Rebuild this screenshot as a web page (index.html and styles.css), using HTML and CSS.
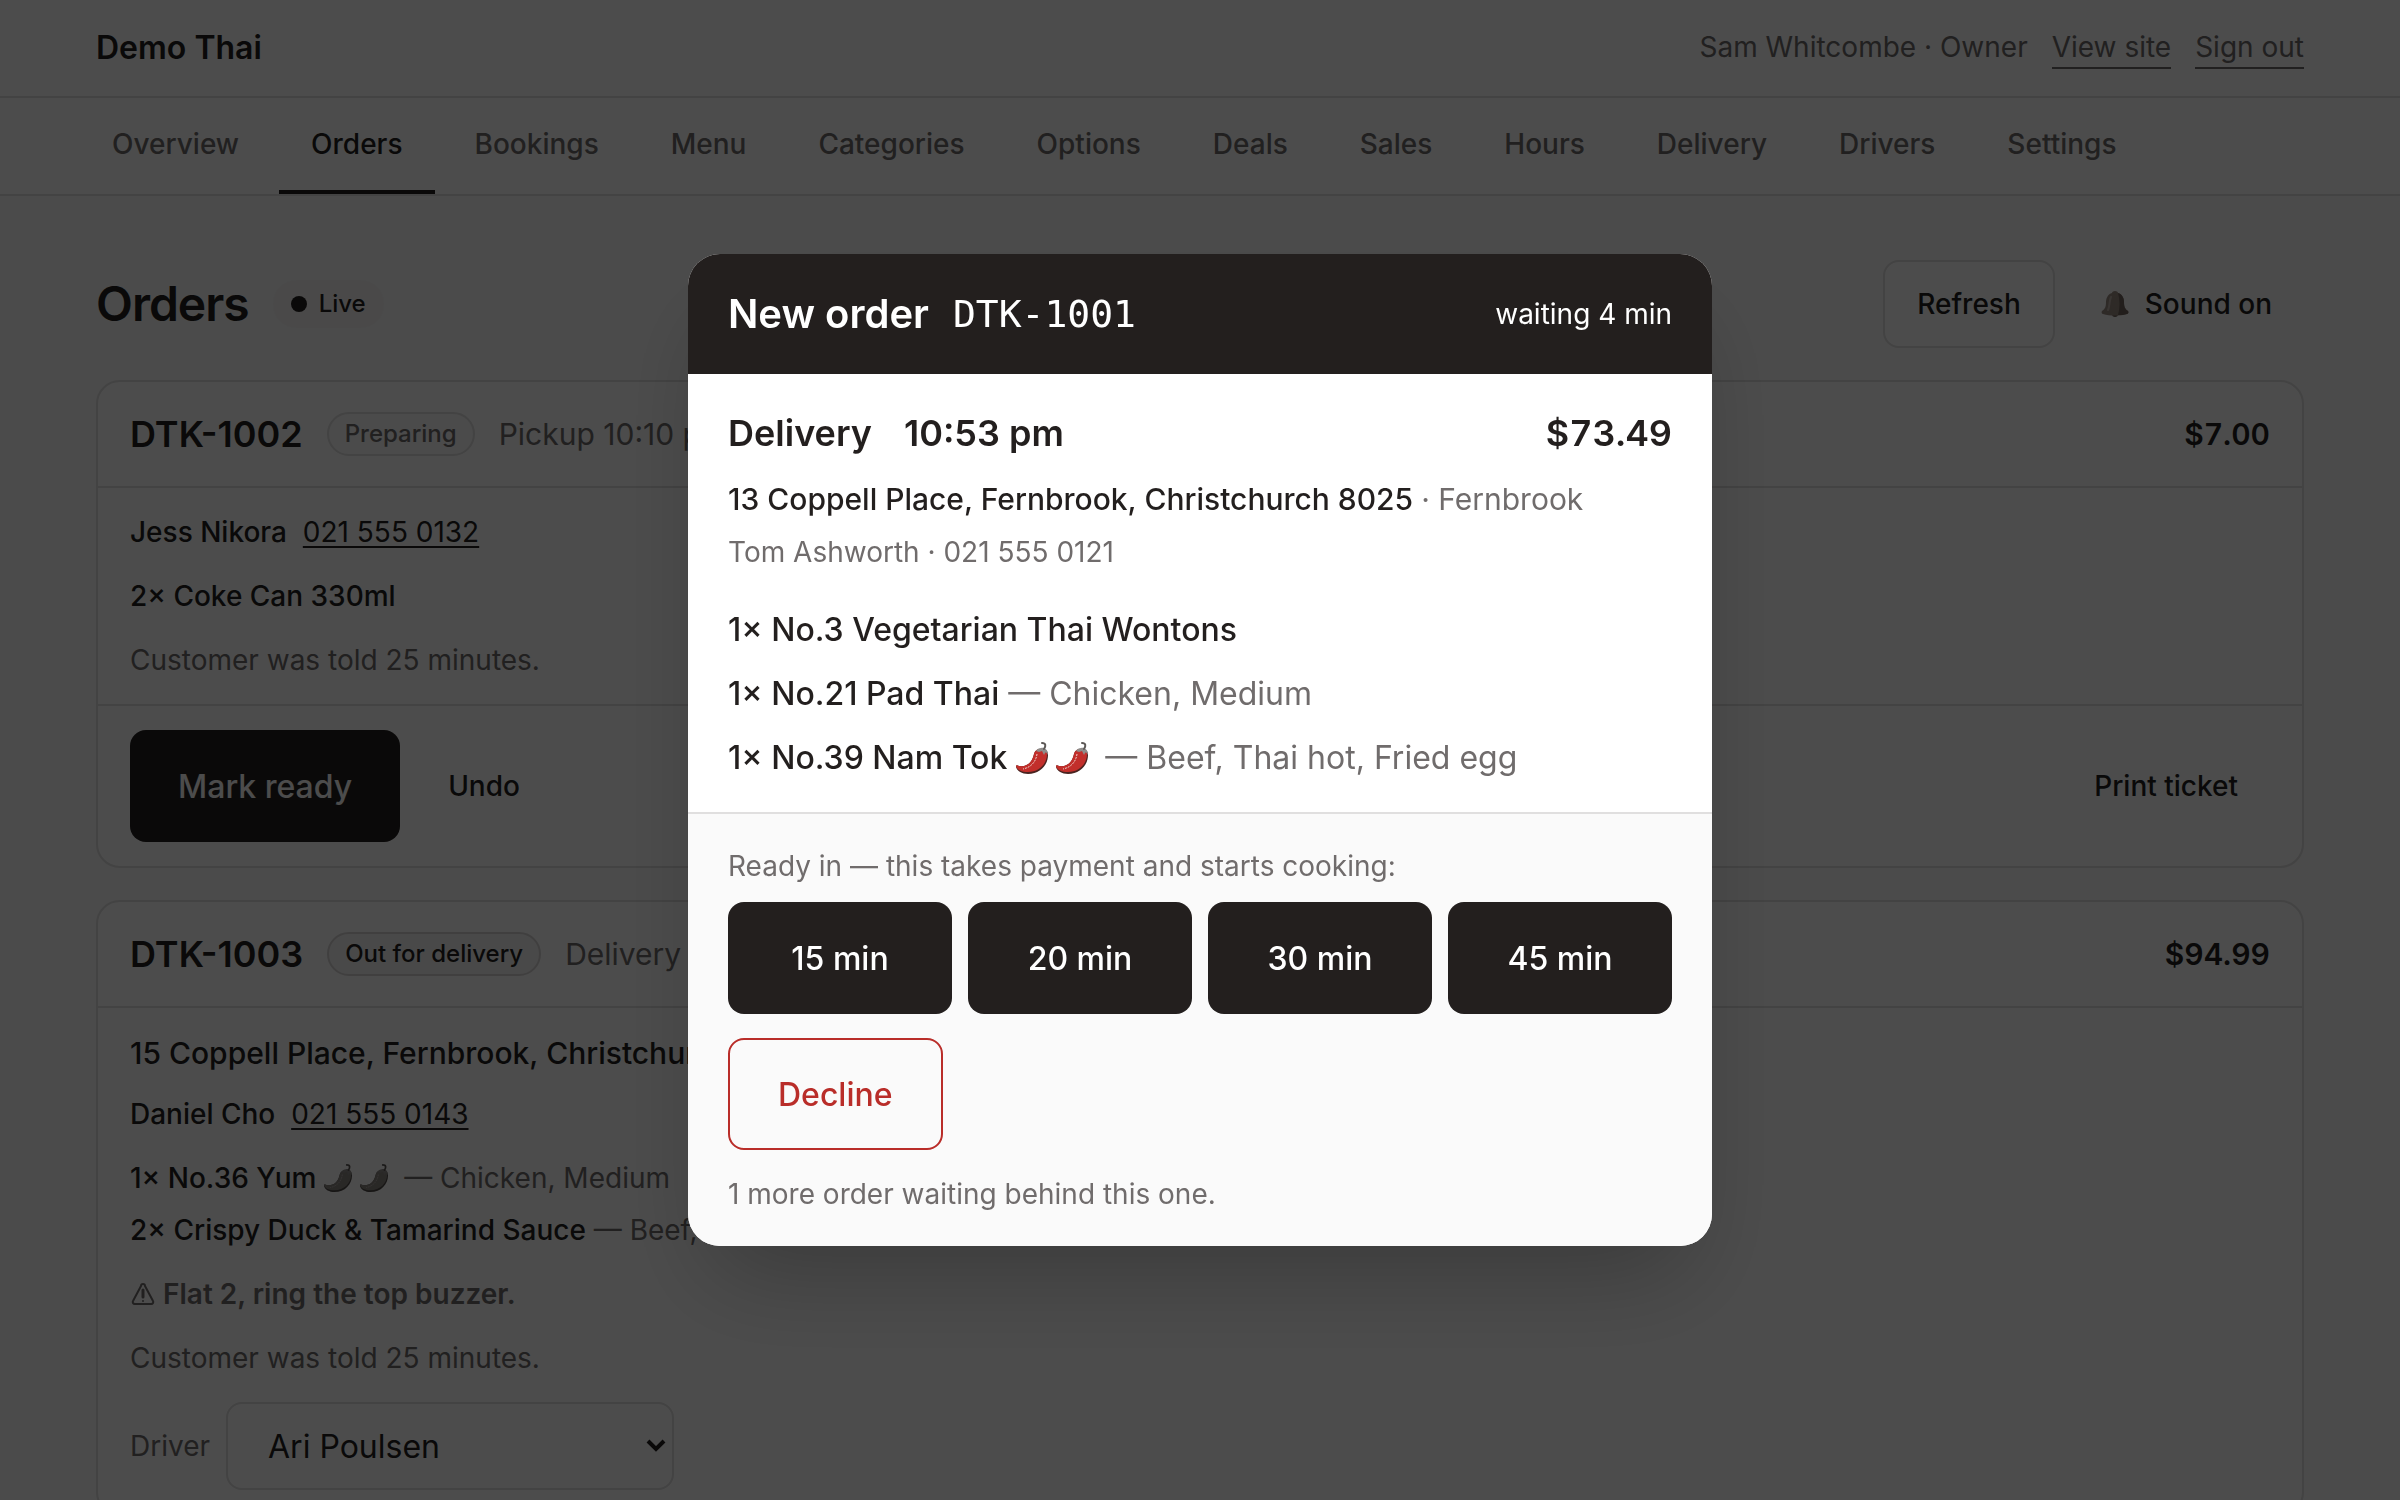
FILE: index.html
```html
<!DOCTYPE html>
<html lang="en">
<head>
    <meta charset="utf-8">
    <meta name="viewport" content="width=device-width, initial-scale=1">
    <title>Orders - Demo Thai</title>
    <link rel="stylesheet" href="styles.css">
</head>
<body>

<!-- Shared icons -->
<svg class="icon-defs" aria-hidden="true">
    <symbol id="icon-chili" viewBox="0 0 32 32">
        <path class="chili-shade" d="M18 12c1-4 4-5 7-5 5 0 7 2 7 6 0 10-8 19-20 19-6 0-11-3-12-7 0-2 1-2 3-1 8 1 13-3 15-12z"/>
        <path class="chili-body" d="M18 12c1-4 4-5 7-5 4 0 6 2 6 5 0 10-8 18-19 18-6 0-11-2-12-6 0-1 1-1 3 0 8 1 13-3 15-12z"/>
        <path class="chili-shine" d="M21 12c-1 7-5 13-14 15"/>
        <path class="chili-cap" d="M20 9c1-2 3-3 5-3 4-1 7 2 7 7-1-2-2-3-3-2l-1 2-2-4-3 1z"/>
        <path class="chili-stem" d="M28 7c2-3 2-6-2-6"/>
    </symbol>
</svg>

<header class="topbar">
    <strong class="brand">Demo Thai</strong>
    <div class="account">
        <span>Sam Whitcombe · Owner</span>
        <a href="#">View site</a>
        <a href="#">Sign out</a>
    </div>
</header>

<nav class="tabs">
    <a href="#">Overview</a>
    <a href="#" class="active">Orders</a>
    <a href="#">Bookings</a>
    <a href="#">Menu</a>
    <a href="#">Categories</a>
    <a href="#">Options</a>
    <a href="#">Deals</a>
    <a href="#">Sales</a>
    <a href="#">Hours</a>
    <a href="#">Delivery</a>
    <a href="#">Drivers</a>
    <a href="#">Settings</a>
</nav>

<main class="page">
    <div class="page-head">
        <h1>Orders</h1>
        <span class="live"><span class="live-dot"></span>Live</span>
        <div class="page-actions">
            <button type="button" class="btn btn-outline">Refresh</button>
            <button type="button" class="btn btn-ghost">
                <svg class="bell" viewBox="0 0 28 28" aria-hidden="true">
                    <circle cx="14" cy="24" r="3" fill="#6f625c"/>
                    <path d="M14 1c2 0 3 1 3 2 4 1 6 5 6 9 0 5 1 7 4 9 1 1 0 3-1 3-7 2-17 2-24 0-1 0-2-2-1-3 3-2 4-4 4-9 0-4 2-8 6-9 0-1 1-2 3-2z" fill="#9c8d84"/>
                    <path d="M17 3c4 1 6 5 6 9 0 5 1 7 4 9 1 1 0 3-1 3-3 1-6 1-9 1 2-7 2-15 0-22z" fill="#73665f"/>
                    <path d="M10 7c-2 4-1 9-3 13" fill="none" stroke="#bfb3ab" stroke-width="2" stroke-linecap="round"/>
                </svg>
                Sound on
            </button>
        </div>
    </div>

    <article class="card">
        <div class="card-head">
            <h2>DTK-1002</h2>
            <span class="badge">Preparing</span>
            <span class="when">Pickup 10:10 pm</span>
            <span class="total">$7.00</span>
        </div>
        <div class="card-body">
            <p class="customer"><b>Jess Nikora</b> <a href="tel:0215550132">021 555 0132</a></p>
            <ul class="items">
                <li><b>2× Coke Can 330ml</b></li>
            </ul>
            <p class="muted">Customer was told 25 minutes.</p>
        </div>
        <div class="card-foot">
            <button type="button" class="btn btn-primary btn-lg">Mark ready</button>
            <button type="button" class="btn btn-ghost">Undo</button>
            <button type="button" class="btn btn-ghost push">Print ticket</button>
        </div>
    </article>

    <article class="card">
        <div class="card-head">
            <h2>DTK-1003</h2>
            <span class="badge badge-strong">Out for delivery</span>
            <span class="when">Delivery 10:20 pm</span>
            <span class="total">$94.99</span>
        </div>
        <div class="card-body">
            <div class="contact">
                <p class="address">15 Coppell Place, Fernbrook, Christchurch 8025</p>
                <p class="customer"><b>Daniel Cho</b> <a href="tel:0215550143">021 555 0143</a></p>
            </div>
            <ul class="items">
                <li><b>1× No.36 Yum</b> <svg class="chili"><use href="#icon-chili"/></svg><svg class="chili"><use href="#icon-chili"/></svg> <span class="muted">— Chicken, Medium</span></li>
                <li><b>2× Crispy Duck &amp; Tamarind Sauce</b> <span class="muted">— Beef, Mild</span></li>
            </ul>
            <p class="note">
                <svg class="warn" viewBox="0 0 24 24" aria-hidden="true">
                    <path d="M10 4a2 2 0 0 1 4 0l8 15a2 2 0 0 1-2 3H4a2 2 0 0 1-2-3z" fill="none" stroke="currentColor" stroke-width="2" stroke-linejoin="round"/>
                    <path d="M12 8v7" stroke="currentColor" stroke-width="3" stroke-linecap="round"/>
                    <circle cx="12" cy="19" r="1" fill="currentColor"/>
                </svg>
                Flat 2, ring the top buzzer.
            </p>
            <p class="muted">Customer was told 25 minutes.</p>
            <div class="driver">
                <label for="driver">Driver</label>
                <div class="select">
                    <select id="driver">
                        <option>Ari Poulsen</option>
                    </select>
                    <svg class="chevron" viewBox="0 0 20 14" aria-hidden="true"><path d="M2 2l8 8 8-8" fill="none" stroke="currentColor" stroke-width="4"/></svg>
                </div>
            </div>
        </div>
    </article>
</main>

<!-- New order alert -->
<div class="overlay">
    <section class="modal" role="dialog" aria-modal="true" aria-labelledby="modal-title">
        <header class="modal-head">
            <h2 id="modal-title">New order</h2>
            <span class="ref">DTK-1001</span>
            <span class="waiting">waiting 4 min</span>
        </header>
        <div class="modal-body">
            <div class="summary">
                <span>Delivery</span>
                <span>10:53 pm</span>
                <span class="amount">$73.49</span>
            </div>
            <div class="contact">
                <p class="address">13 Coppell Place, Fernbrook, Christchurch 8025 <span class="muted">· Fernbrook</span></p>
                <p class="muted">Tom Ashworth · 021 555 0121</p>
            </div>
            <ul class="items">
                <li><b>1× No.3 Vegetarian Thai Wontons</b></li>
                <li><b>1× No.21 Pad Thai</b> <span class="muted">— Chicken, Medium</span></li>
                <li><b>1× No.39 Nam Tok</b> <svg class="chili"><use href="#icon-chili"/></svg><svg class="chili"><use href="#icon-chili"/></svg> <span class="muted">— Beef, Thai hot, Fried egg</span></li>
            </ul>
        </div>
        <footer class="modal-foot">
            <p class="muted">Ready in — this takes payment and starts cooking:</p>
            <div class="times">
                <button type="button" class="btn btn-primary btn-lg">15 min</button>
                <button type="button" class="btn btn-primary btn-lg">20 min</button>
                <button type="button" class="btn btn-primary btn-lg">30 min</button>
                <button type="button" class="btn btn-primary btn-lg">45 min</button>
            </div>
            <button type="button" class="btn btn-danger btn-lg">Decline</button>
            <p class="muted">1 more order waiting behind this one.</p>
        </footer>
    </section>
</div>

</body>
</html>
```

FILE: styles.css
```css
:root {
    --ink: #231f1e;
    --muted: #706c6c;
    --line: #e0dfdf;
    --soft: #fafafa;
    --red: #b92d29;
}

* {
    box-sizing: border-box;
    margin: 0;
    padding: 0;
}

/* The page does not scroll while the alert is open */
body {
    height: 100vh;
    overflow: hidden;
    background: var(--soft);
    color: var(--ink);
    font-family: Inter, "Liberation Sans", sans-serif;
    font-size: 28px;
    line-height: 40px;
}

a {
    color: inherit;
}

b {
    font-weight: 500;
}

ul {
    list-style: none;
}

.icon-defs {
    position: absolute;
    width: 0;
    height: 0;
}

.muted {
    color: var(--muted);
}

.push {
    margin-left: auto;
}

/* Top bar */
.topbar {
    display: flex;
    align-items: center;
    justify-content: space-between;
    height: 98px;
    padding: 0 96px;
    background: #fff;
    border-bottom: 2px solid var(--line);
}

.brand {
    font-size: 32px;
    font-weight: 600;
    line-height: 42px;
}

.account {
    display: flex;
    gap: 24px;
    color: var(--muted);
}

.account a {
    text-decoration: none;
    border-bottom: 2px solid currentColor;
}

/* Tabs */
.tabs {
    display: flex;
    gap: 8px;
    padding: 0 80px;
    background: #fff;
    border-bottom: 2px solid var(--line);
}

.tabs a {
    padding: 26px 32px;
    border-bottom: 4px solid transparent;
    color: var(--muted);
    font-weight: 500;
    text-decoration: none;
}

.tabs a.active {
    color: var(--ink);
    border-color: var(--ink);
}

/* Page */
.page {
    display: flex;
    flex-direction: column;
    gap: 32px;
    padding: 64px 96px;
}

.page-head {
    display: flex;
    align-items: center;
    gap: 24px;
}

.page-head h1 {
    font-size: 48px;
    font-weight: 600;
    letter-spacing: -1px;
    line-height: 56px;
}

.live {
    display: flex;
    align-items: center;
    gap: 12px;
    padding: 4px 18px;
    border-radius: 24px;
    background: #f7f6f6;
    font-size: 24px;
    font-weight: 500;
}

.live-dot {
    width: 16px;
    height: 16px;
    border-radius: 50%;
    background: var(--ink);
}

.page-actions {
    display: flex;
    gap: 14px;
    margin-left: auto;
}

/* Buttons */
.btn {
    display: inline-flex;
    align-items: center;
    justify-content: center;
    gap: 16px;
    height: 88px;
    padding: 0 32px;
    border: none;
    border-radius: 16px;
    background: transparent;
    color: var(--ink);
    font-family: inherit;
    font-size: 28px;
    font-weight: 500;
    cursor: pointer;
}

.btn-lg {
    height: 112px;
    padding: 0 48px;
    font-size: 32px;
}

.btn-outline {
    background: #fff;
    border: 2px solid var(--line);
}

.btn-primary {
    background: var(--ink);
    color: #fff;
}

.btn-danger {
    margin-bottom: 24px;
    border: 2px solid var(--red);
    color: var(--red);
}

.bell {
    width: 28px;
    height: 28px;
}

/* Order cards */
.card {
    background: #fff;
    border: 2px solid var(--line);
    border-radius: 24px;
}

.card-head {
    display: flex;
    align-items: center;
    gap: 24px;
    height: 106px;
    padding: 0 32px;
    border-bottom: 2px solid var(--line);
}

.card-head h2 {
    font-size: 36px;
    font-weight: 600;
}

.badge {
    padding: 0 16px;
    border: 2px solid var(--line);
    border-radius: 22px;
    background: var(--soft);
    color: var(--muted);
    font-size: 24px;
    font-weight: 500;
}

.badge-strong {
    border-color: #d6d4d4;
    background: #f5f4f4;
    color: var(--ink);
}

.when {
    color: var(--muted);
    font-size: 30px;
}

.total,
.amount {
    margin-left: auto;
    font-variant-numeric: tabular-nums;
}

.total {
    font-size: 30px;
    font-weight: 600;
}

.card-body {
    display: flex;
    flex-direction: column;
    gap: 24px;
    padding: 24px 32px;
}

.contact {
    display: flex;
    flex-direction: column;
    gap: 20px;
}

.address {
    font-size: 30px;
    font-weight: 500;
    line-height: 42px;
}

/* The suburb and everything after the street address */
.address .muted {
    font-weight: 400;
}

.customer a {
    margin-left: 8px;
    text-decoration-thickness: 2px;
    text-underline-offset: 4px;
}

.items {
    display: flex;
    flex-direction: column;
    gap: 12px;
}

.note {
    color: var(--muted);
    font-weight: 600;
}

.warn {
    width: 26px;
    height: 24px;
    vertical-align: -2px;
}

.card-foot {
    display: flex;
    align-items: center;
    gap: 16px;
    padding: 24px 32px;
    border-top: 2px solid var(--line);
}

.driver {
    display: flex;
    align-items: center;
    gap: 16px;
    color: var(--muted);
}

/* The chevron shares the select's grid cell */
.select {
    display: grid;
    align-items: center;
    color: var(--ink);
}

.select select {
    grid-area: 1 / 1;
    width: 448px;
    height: 88px;
    padding: 0 40px;
    border: 2px solid var(--line);
    border-radius: 16px;
    background: #fff;
    color: inherit;
    font-family: inherit;
    font-size: 32px;
    appearance: none;
}

.chevron {
    grid-area: 1 / 1;
    justify-self: end;
    width: 20px;
    height: 14px;
    margin-right: 8px;
    pointer-events: none;
}

/* Chili icon, red inside the alert and grey behind it */
.chili {
    --chili: #8b8581;
    --chili-dark: #4f4a48;
    --chili-light: #b5afab;
    width: 28px;
    height: 28px;
    margin-right: 8px;
    vertical-align: -4px;
}

.chili-body {
    fill: var(--chili);
}

.chili-shade {
    fill: var(--chili-dark);
}

.chili-shine {
    fill: none;
    stroke: var(--chili-light);
    stroke-width: 1;
    stroke-dasharray: 2 1;
}

.chili-cap {
    fill: #8f8c8a;
}

.chili-stem {
    fill: none;
    stroke: #5c5856;
    stroke-width: 2;
    stroke-linecap: round;
}

/* Alert */
.overlay {
    position: fixed;
    inset: 0;
    display: flex;
    align-items: center;
    justify-content: center;
    padding: 32px;
    background: rgba(0, 0, 0, 0.7);
}

.modal {
    width: 100%;
    max-width: 1024px;
    overflow: hidden;
    border-radius: 32px;
    background: #fff;
    box-shadow: 0 50px 100px -24px rgba(0, 0, 0, 0.25);
}

.modal-head {
    display: flex;
    align-items: center;
    gap: 24px;
    padding: 32px 40px;
    background: var(--ink);
    color: #fff;
}

.modal-head h2 {
    font-size: 40px;
    font-weight: 600;
    line-height: 56px;
}

.ref {
    font-family: "DejaVu Sans Mono", monospace;
    font-size: 38px;
}

.waiting {
    margin-left: auto;
}

.modal-body {
    padding: 32px 40px 30px;
}

.summary {
    display: flex;
    gap: 32px;
    margin-bottom: 18px;
    font-size: 36px;
    font-weight: 600;
    line-height: 54px;
}

.modal .contact {
    gap: 12px;
    margin-bottom: 34px;
}

.modal .items {
    gap: 16px;
    font-size: 32px;
    line-height: 48px;
}

.modal .chili {
    --chili: #c22f2b;
    --chili-dark: #4a2320;
    --chili-light: #eecfca;
    width: 32px;
    height: 32px;
    vertical-align: -5px;
}

.modal-foot {
    padding: 32px 40px;
    border-top: 2px solid var(--line);
    background: var(--soft);
}

.times {
    display: grid;
    grid-template-columns: repeat(4, 1fr);
    gap: 16px;
    margin: 16px 0 24px;
}
```
